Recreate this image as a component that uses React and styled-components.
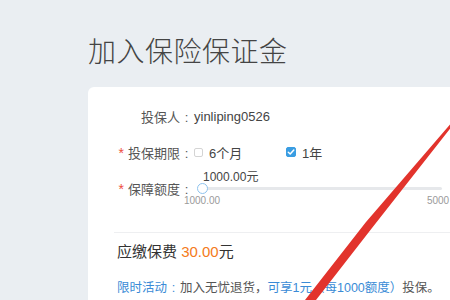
import React from 'react';
import styled, { createGlobalStyle } from 'styled-components';

const GlobalStyle = createGlobalStyle`
  html, body {
    margin: 0;
    padding: 0;
    width: 450px;
    height: 300px;
    overflow: hidden;
    background: #eaeef2;
    font-family: "Liberation Sans", "Noto Sans CJK SC", sans-serif;
  }
`;

const App = () => {
  return (
    <Page>
      <GlobalStyle />
      <Title>加入保险保证金</Title>
      <Card>
        <Form>
          <Label>投保人<Colon>:</Colon></Label>
          <Value>yinliping0526</Value>

          <Label><Star>*</Star>投保期限<Colon>:</Colon></Label>
          <Value>
            <Option>
              <Box />
              6个月
            </Option>
            <Option>
              <Box checked>
                <svg width="8" height="8" viewBox="0 0 8 8">
                  <path d="M1.3 4.2 L3.2 6 L6.8 2" fill="none" stroke="#fff" strokeWidth="1.5" strokeLinecap="round" strokeLinejoin="round" />
                </svg>
              </Box>
              1年
            </Option>
          </Value>

          <Label><Star>*</Star>保障额度<Colon>:</Colon></Label>
          <Value>
            <Slider>
              <Bubble>1000.00元</Bubble>
              <Track />
              <Handle />
              <Mark side="left">1000.00</Mark>
              <Mark side="right">5000</Mark>
            </Slider>
          </Value>
        </Form>
        <Divider />
        <Fee>应缴保费 <Amount>30.00</Amount>元</Fee>
        <Promo>
          <Blue>限时活动<Colon>:</Colon></Blue>加入无忧退货，<Blue>可享1元（每1000额度）</Blue>投保。
        </Promo>
      </Card>
      <Arrow width="450" height="300" viewBox="0 0 450 300">
        <polygon points="453,121 453,125 372,228 316,300 305,300 366,222" fill="#e2332c" />
      </Arrow>
    </Page>
  );
};

export default App;

const Page = styled.div`
  width: 450px;
  height: 300px;
  padding: 33px 0 0 88px;
  box-sizing: border-box;
  overflow: hidden;
`;

const Title = styled.h1`
  margin: 0;
  font-size: 28px;
  line-height: 34px;
  font-weight: 300;
  color: #444;
  letter-spacing: 0.5px;
  font-family: "Noto Sans CJK SC", sans-serif;
`;

const Card = styled.div`
  margin-top: 20px;
  width: 420px;
  height: 260px;
  background: #fff;
  border-radius: 6px;
  padding: 11px 0 0 29px;
  box-sizing: border-box;
`;

const Form = styled.div`
  display: grid;
  grid-template-columns: 76px 1fr;
  grid-auto-rows: 36px;
  align-items: center;
`;

const Label = styled.div`
  font-size: 13px;
  color: #555;
  text-align: right;
  white-space: nowrap;
`;

const Colon = styled.span`
  display: inline-block;
  width: 13px;
  text-align: center;
  font-family: "Liberation Sans", sans-serif;
`;

const Star = styled.span`
  color: #ee4d3d;
  margin-right: 4px;
  font-family: "Liberation Sans", sans-serif;
  font-size: 14px;
`;

const Value = styled.div`
  display: flex;
  align-items: center;
  font-size: 13px;
  color: #444;
  padding-left: 1px;
`;

const Option = styled.label`
  display: flex;
  align-items: center;
  gap: 6px;
  min-width: 92px;
  font-size: 13px;
  color: #444;
`;

const Box = styled.span`
  width: ${(p) => (p.checked ? '10px' : '9px')};
  height: ${(p) => (p.checked ? '10px' : '9px')};
  box-sizing: border-box;
  border-radius: 2px;
  border: 1px solid ${(p) => (p.checked ? '#3a9de2' : '#d4d4d4')};
  background: ${(p) => (p.checked ? '#3a9de2' : '#fff')};
  display: flex;
  align-items: center;
  justify-content: center;
`;

const Slider = styled.div`
  position: relative;
  width: 245px;
  height: 36px;
  margin-left: 3px;
`;

const Bubble = styled.span`
  position: absolute;
  left: 6px;
  top: -3px;
  font-size: 12px;
  color: #444;
`;

const Track = styled.div`
  position: absolute;
  left: 4px;
  right: 0;
  top: 17px;
  height: 3px;
  border-radius: 2px;
  background: #e6e8eb;
`;

const Handle = styled.div`
  position: absolute;
  left: 0;
  top: 13px;
  width: 11px;
  height: 11px;
  box-sizing: border-box;
  border-radius: 50%;
  border: 1.5px solid #8ec3ee;
  background: #fff;
`;

const Mark = styled.span`
  position: absolute;
  top: 25px;
  font-size: 10px;
  color: #9a9a9a;
  ${(p) => (p.side === 'left' ? 'left: 5px; transform: translateX(-50%);' : 'right: 4px; transform: translateX(50%);')}
`;

const Divider = styled.div`
  margin-top: 26px;
  margin-left: -3px;
  height: 1px;
  background: #eeeff1;
`;

const Fee = styled.div`
  margin-top: 8px;
  font-size: 15px;
  line-height: 22px;
  color: #333;
`;

const Amount = styled.span`
  color: #f47a20;
`;

const Promo = styled.div`
  margin-top: 15px;
  font-size: 12.5px;
  line-height: 20px;
  color: #555;
  white-space: nowrap;
`;

const Blue = styled.span`
  color: #3a8bd6;
`;

const Arrow = styled.svg`
  position: fixed;
  left: 0;
  top: 0;
  pointer-events: none;
`;
